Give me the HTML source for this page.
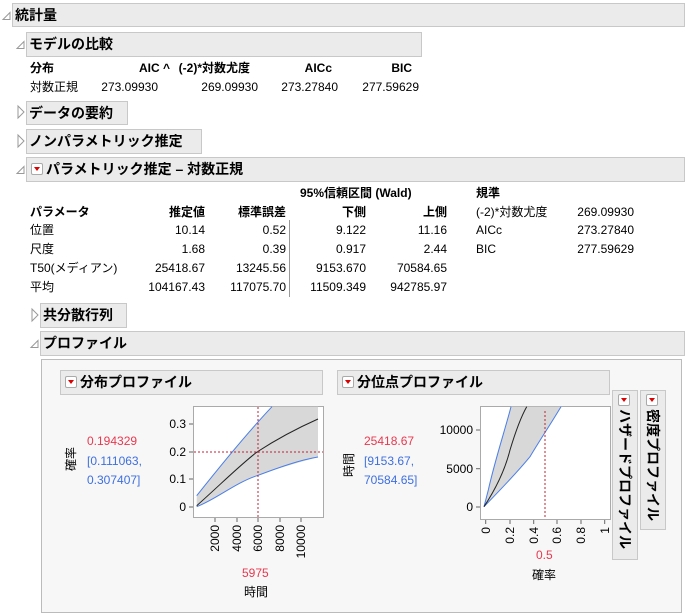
<!DOCTYPE html>
<html><head><meta charset="utf-8"><style>
*{margin:0;padding:0;box-sizing:border-box}
body{width:685px;height:615px;background:#fff;font-family:"Liberation Sans","Noto Sans CJK JP",sans-serif;font-size:12px;color:#000;position:relative;overflow:hidden}
.a{position:absolute;white-space:nowrap;line-height:14px}
.h{position:absolute;background:#ebebeb;border:1px solid #c8c8c8;font-weight:bold;font-size:14px;line-height:22px;padding-left:2px;white-space:nowrap}
.r{text-align:right}
.b{font-weight:bold}
.dd{display:inline-block;width:12px;height:12px;border:1px solid #aaa;border-radius:2px;background:#fff;vertical-align:-1px;margin-right:3px;position:relative}
.dd:after{content:"";position:absolute;left:2px;top:3px;border-left:3px solid transparent;border-right:3px solid transparent;border-top:4px solid #d00}
.v{writing-mode:vertical-rl;text-orientation:sideways;line-height:24px}
.red{color:#e8384f}.blue{color:#3d6fe0}
</style></head><body>
<svg class="a" style="left:0;top:0" width="685" height="615">
<g fill="none" stroke="#999" stroke-width="1">
<path d="M3 19.5 L10 19.5 L10 12.5 Z"/>
<path d="M17 48.5 L24 48.5 L24 41.5 Z"/>
<path d="M18 106 L24 112 L18 118 Z"/>
<path d="M18 135 L24 141 L18 147 Z"/>
<path d="M17 173.5 L24 173.5 L24 166.5 Z"/>
<path d="M32 309 L38 315 L32 321 Z"/>
<path d="M31 347.5 L38 347.5 L38 340.5 Z"/>
<path d="M51 387.5 L58 387.5 L58 380.5 Z"/>
<path d="M328 387.5 L335 387.5 L335 380.5 Z"/>
<path d="M617 376 L623 381 L617 386 Z"/>
<path d="M645 376 L651 381 L645 386 Z"/>
</g>
<line x1="289.5" y1="220" x2="289.5" y2="297" stroke="#999"/>
<rect x="41.5" y="359.5" width="640" height="253" fill="#f7f7f7" stroke="#bbb"/>
<rect x="193.5" y="406.5" width="130" height="111" fill="#fff" stroke="#aaa"/>
<path d="M196.7 495.7 C225 460 250 430 272 406.7 L318 406.7 L318 457 C290 465 265 472 257 475.7 C235 483 215 500 196.7 506.7 Z" fill="#d8d8d8"/>
<path d="M196.7 495.7 C225 460 250 430 272 406.7" fill="none" stroke="#4a7ee8"/>
<path d="M196.7 506.7 C215 500 235 483 257 475.7 C280 467 300 460 318 457" fill="none" stroke="#4a7ee8"/>
<path d="M196.7 505.7 C220 485 240 465 257 452 C280 437 300 427 318 419" fill="none" stroke="#222"/>
<line x1="258" y1="407" x2="258" y2="517" stroke="#c02030" stroke-dasharray="2,2"/>
<line x1="194" y1="452" x2="323" y2="452" stroke="#c02030" stroke-dasharray="2,2"/>
<g stroke="#666"><line x1="189" y1="424" x2="193" y2="424"/><line x1="189" y1="452" x2="193" y2="452"/><line x1="189" y1="479" x2="193" y2="479"/><line x1="189" y1="507" x2="193" y2="507"/>
<line x1="215" y1="518" x2="215" y2="522"/><line x1="237" y1="518" x2="237" y2="522"/><line x1="258" y1="518" x2="258" y2="522"/><line x1="280" y1="518" x2="280" y2="522"/><line x1="301" y1="518" x2="301" y2="522"/></g>
<rect x="480.5" y="406.5" width="130" height="113" fill="#fff" stroke="#aaa"/>
<path d="M484 506.7 L488.3 490 C495 460 505 430 511 406.7 L561 406.7 C550 425 540 440 530 456.7 C515 475 500 490 484 506.7 Z" fill="#d8d8d8"/>
<path d="M484 506.7 L488.3 490 C495 460 505 430 511 406.7" fill="none" stroke="#4a7ee8"/>
<path d="M484 506.7 C500 490 515 475 530 456.7 C540 440 550 425 561 406.7" fill="none" stroke="#4a7ee8"/>
<path d="M484 506.7 C495 490 505 470 510 450 C516 430 522 415 526.7 406.7" fill="none" stroke="#222"/>
<line x1="545" y1="411" x2="545" y2="519" stroke="#c02030" stroke-dasharray="2,2"/>
<g stroke="#666"><line x1="476" y1="430" x2="480" y2="430"/><line x1="476" y1="468.7" x2="480" y2="468.7"/><line x1="476" y1="507" x2="480" y2="507"/>
<line x1="485.7" y1="520" x2="485.7" y2="524"/><line x1="510" y1="520" x2="510" y2="524"/><line x1="533.7" y1="520" x2="533.7" y2="524"/><line x1="557" y1="520" x2="557" y2="524"/><line x1="581" y1="520" x2="581" y2="524"/><line x1="604.7" y1="520" x2="604.7" y2="524"/></g>
<g font-family="Liberation Sans,sans-serif" font-size="12" fill="#000">
<text x="186" y="428" text-anchor="end">0.3</text><text x="186" y="456" text-anchor="end">0.2</text><text x="186" y="483" text-anchor="end">0.1</text><text x="186" y="511" text-anchor="end">0</text>
<g text-anchor="end"><text transform="translate(219,525) rotate(-90)">2000</text><text transform="translate(241,525) rotate(-90)">4000</text><text transform="translate(262,525) rotate(-90)">6000</text><text transform="translate(284,525) rotate(-90)">8000</text><text transform="translate(305,525) rotate(-90)">10000</text>
<text x="473" y="434">10000</text><text x="473" y="473">5000</text><text x="473" y="511">0</text>
<text transform="translate(490,527) rotate(-90)">0</text><text transform="translate(514,527) rotate(-90)">0.2</text><text transform="translate(538,527) rotate(-90)">0.4</text><text transform="translate(561,527) rotate(-90)">0.6</text><text transform="translate(585,527) rotate(-90)">0.8</text><text transform="translate(609,527) rotate(-90)">1</text></g>
</g>
<g font-family="Liberation Sans,Noto Sans CJK JP,sans-serif" font-size="12" fill="#000">
<text transform="translate(75,459) rotate(-90)" text-anchor="middle">確率</text>
<text transform="translate(353,465) rotate(-90)" text-anchor="middle">時間</text>
</g>
</svg>

<div class="h" style="left:12px;top:3px;width:673px;height:24px">統計量</div>
<div class="h" style="left:26px;top:32px;width:396px;height:25px">モデルの比較</div>
<div class="a b" style="left:30px;top:61px">分布</div>
<div class="a b r" style="left:100px;top:61px;width:70px">AIC ^</div>
<div class="a b r" style="left:160px;top:61px;width:90px">(-2)*対数尤度</div>
<div class="a b r" style="left:260px;top:61px;width:72px">AICc</div>
<div class="a b r" style="left:340px;top:61px;width:72px">BIC</div>
<div class="a" style="left:30px;top:80px">対数正規</div>
<div class="a r" style="left:80px;top:80px;width:78px">273.09930</div>
<div class="a r" style="left:180px;top:80px;width:78px">269.09930</div>
<div class="a r" style="left:260px;top:80px;width:78px">273.27840</div>
<div class="a r" style="left:340px;top:80px;width:79px">277.59629</div>
<div class="h" style="left:26px;top:101px;width:102px;height:24px">データの要約</div>
<div class="h" style="left:26px;top:129px;width:176px;height:25px">ノンパラメトリック推定</div>
<div class="h" style="left:26px;top:157px;width:659px;height:25px;padding-left:4px"><span class="dd"></span>パラメトリック推定 – 対数正規</div>
<div class="a b" style="left:300px;top:186px">95%信頼区間 (Wald)</div>
<div class="a b" style="left:476px;top:186px">規準</div>
<div class="a b" style="left:30px;top:205px">パラメータ</div>
<div class="a b r" style="left:130px;top:205px;width:75px">推定値</div>
<div class="a b r" style="left:210px;top:205px;width:76px">標準誤差</div>
<div class="a b r" style="left:290px;top:205px;width:76px">下側</div>
<div class="a b r" style="left:370px;top:205px;width:77px">上側</div>
<div class="a" style="left:476px;top:205px">(-2)*対数尤度</div>
<div class="a r" style="left:560px;top:205px;width:74px">269.09930</div>
<div class="a" style="left:476px;top:223px">AICc</div>
<div class="a r" style="left:560px;top:223px;width:74px">273.27840</div>
<div class="a" style="left:476px;top:242px">BIC</div>
<div class="a r" style="left:560px;top:242px;width:74px">277.59629</div>
<div class="a" style="left:30px;top:223px">位置</div>
<div class="a" style="left:30px;top:242px">尺度</div>
<div class="a" style="left:30px;top:261px">T50(メディアン)</div>
<div class="a" style="left:30px;top:280px">平均</div>
<div class="a r" style="left:120px;top:223px;width:85px">10.14</div>
<div class="a r" style="left:120px;top:242px;width:85px">1.68</div>
<div class="a r" style="left:120px;top:261px;width:85px">25418.67</div>
<div class="a r" style="left:120px;top:280px;width:85px">104167.43</div>
<div class="a r" style="left:200px;top:223px;width:86px">0.52</div>
<div class="a r" style="left:200px;top:242px;width:86px">0.39</div>
<div class="a r" style="left:200px;top:261px;width:86px">13245.56</div>
<div class="a r" style="left:200px;top:280px;width:86px">117075.70</div>
<div class="a r" style="left:280px;top:223px;width:86px">9.122</div>
<div class="a r" style="left:280px;top:242px;width:86px">0.917</div>
<div class="a r" style="left:280px;top:261px;width:86px">9153.670</div>
<div class="a r" style="left:280px;top:280px;width:86px">11509.349</div>
<div class="a r" style="left:360px;top:223px;width:87px">11.16</div>
<div class="a r" style="left:360px;top:242px;width:87px">2.44</div>
<div class="a r" style="left:360px;top:261px;width:87px">70584.65</div>
<div class="a r" style="left:360px;top:280px;width:87px">942785.97</div>
<div class="h" style="left:40px;top:303px;width:87px;height:25px">共分散行列</div>
<div class="h" style="left:40px;top:331px;width:645px;height:25px">プロファイル</div>
<div class="h" style="left:60px;top:370px;width:263px;height:25px;padding-left:4px"><span class="dd"></span>分布プロファイル</div>
<div class="h" style="left:337px;top:370px;width:273px;height:25px;padding-left:4px"><span class="dd"></span>分位点プロファイル</div>
<div class="h v" style="left:612px;top:390px;width:26px;height:170px;padding:18px 0 0 1px">ハザードプロファイル</div>
<span class="dd" style="position:absolute;left:618px;top:394px"></span>
<div class="h v" style="left:640px;top:390px;width:26px;height:140px;padding:18px 0 0 1px">密度プロファイル</div>
<span class="dd" style="position:absolute;left:646px;top:394px"></span>
<div class="a red" style="left:87px;top:434px">0.194329</div>
<div class="a blue" style="left:87px;top:454px">[0.111063,</div>
<div class="a blue" style="left:87px;top:473px">0.307407]</div>
<div class="a red" style="left:242px;top:566px">5975</div>
<div class="a" style="left:244px;top:585px">時間</div>
<div class="a red" style="left:364px;top:434px">25418.67</div>
<div class="a blue" style="left:364px;top:454px">[9153.67,</div>
<div class="a blue" style="left:364px;top:473px">70584.65]</div>
<div class="a red" style="left:536px;top:548px">0.5</div>
<div class="a" style="left:532px;top:568px">確率</div>
</body></html>
